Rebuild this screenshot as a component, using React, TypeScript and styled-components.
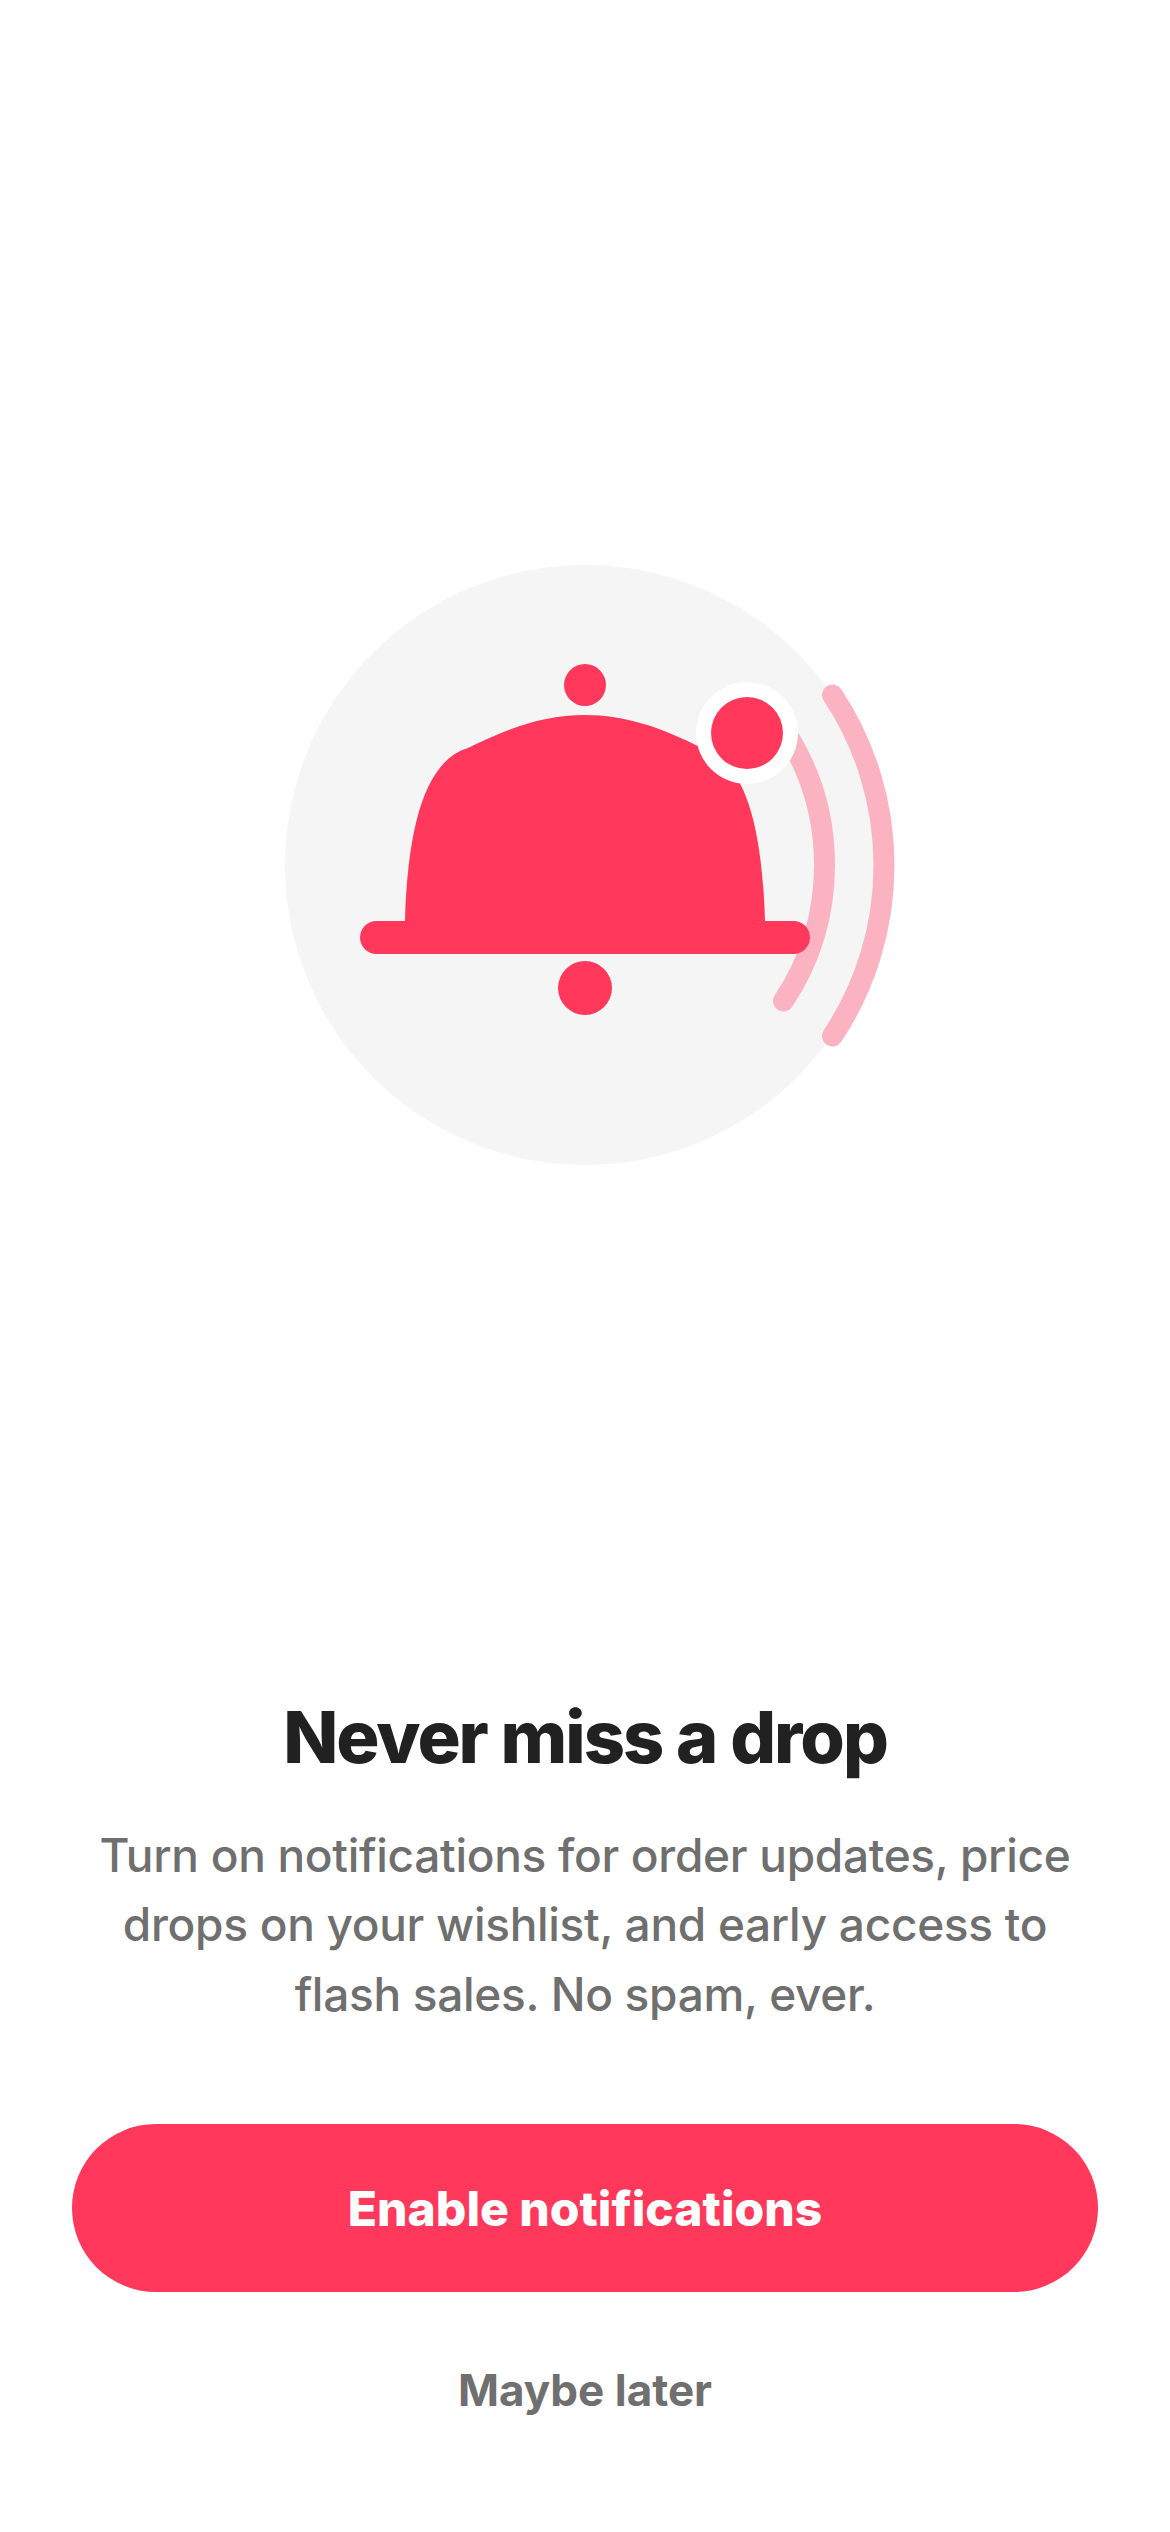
import React from "react";
import styled, { createGlobalStyle } from "styled-components";

const Global = createGlobalStyle`
  html, body { margin: 0; padding: 0; background: #fff; }
  * { box-sizing: border-box; }
`;

const Screen = styled.main`
  width: 1170px;
  height: 2532px;
  display: flex;
  flex-direction: column;
  align-items: center;
  background: #fff;
  font-family: Inter, "Liberation Sans", sans-serif;
  padding: 0 72px 92px;
`;

const Hero = styled.div`
  flex: 1;
  display: flex;
  align-items: flex-start;
  justify-content: center;
  padding-top: 545px;
`;

const Title = styled.h1`
  margin: 0 0 40px;
  font-size: 72px;
  line-height: 88px;
  font-weight: 800;
  letter-spacing: -2px;
  color: #212121;
  text-align: center;
`;

const Body = styled.p`
  margin: 0 0 95px;
  width: 1000px;
  font-size: 46px;
  line-height: 69.5px;
  font-weight: 500;
  letter-spacing: -0.3px;
  color: #6f6f6f;
  text-align: center;
`;

const Primary = styled.button`
  width: 1026px;
  height: 168px;
  flex: none;
  border: 0;
  border-radius: 84px;
  background: #ff385c;
  color: #fff;
  font: inherit;
  font-size: 48px;
  font-weight: 800;
`;

const Secondary = styled.button`
  margin-top: 48px;
  height: 100px;
  flex: none;
  border: 0;
  background: none;
  color: #6f6f6f;
  font: inherit;
  font-size: 44px;
  font-weight: 700;
`;

const Bell = () => (
  <svg width="640" height="640" viewBox="265 545 640 640" aria-hidden="true">
    <circle cx="585" cy="865" r="300" fill="#f5f5f5" />
    <path d="M783.5 729A246 246 0 0 1 783.5 1001" fill="none" stroke="#fbb3c2" strokeWidth="21" strokeLinecap="round" />
    <path d="M832.5 695A308 308 0 0 1 832.5 1036" fill="none" stroke="#fbb3c2" strokeWidth="21" strokeLinecap="round" />
    <circle cx="585" cy="685" r="21" fill="#ff385c" />
    <path d="M405 921C408 818 428 760 468 748C510 727 545 715 585 715C625 715 660 727 702 748C742 760 762 818 765 921Z" fill="#ff385c" />
    <rect x="360" y="921" width="450" height="33" rx="16.5" fill="#ff385c" />
    <circle cx="585" cy="988" r="27" fill="#ff385c" />
    <circle cx="747" cy="733" r="51" fill="#fff" />
    <circle cx="747" cy="733" r="36" fill="#ff385c" />
  </svg>
);

export default function App() {
  return (
    <Screen>
      <Global />
      <Hero><Bell /></Hero>
      <Title>Never miss a drop</Title>
      <Body>Turn on notifications for order updates, price drops on your wishlist, and early access to flash sales. No spam, ever.</Body>
      <Primary>Enable notifications</Primary>
      <Secondary>Maybe later</Secondary>
    </Screen>
  );
}
